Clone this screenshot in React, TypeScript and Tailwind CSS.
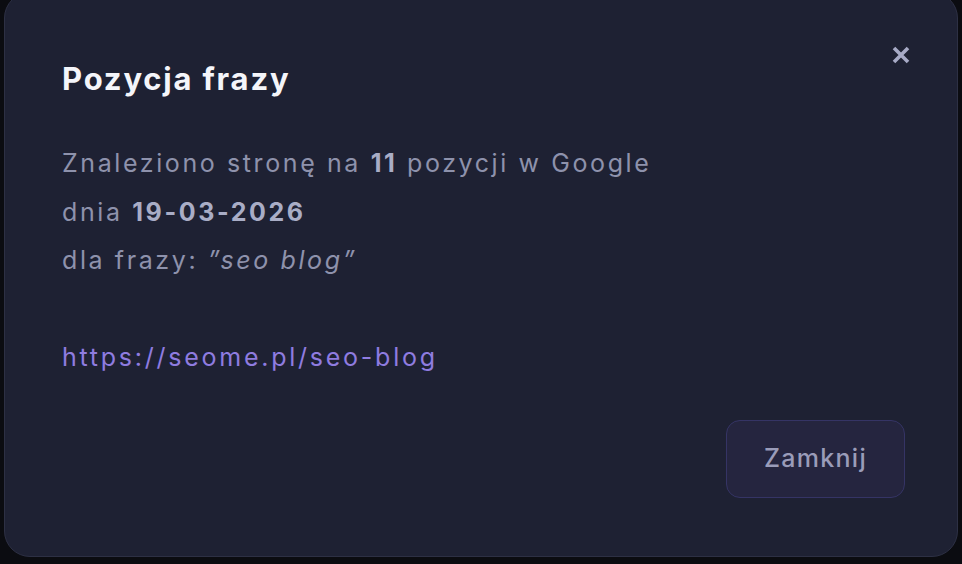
export default function App() {
  return (
    <div className="h-[564px] w-full overflow-hidden bg-[#0b0c11] px-[4px] pb-[7px]">
      <div
        className="relative -mt-[8px] flex h-[565px] flex-col rounded-[26px] border border-[#2d3044] bg-[#1e2133] pl-[57px] pr-[52px] pt-[66px] pb-[58px]"
        style={{ fontFamily: "Inter, 'Noto Sans', sans-serif" }}
      >
        <button
          type="button"
          className="absolute right-[46px] top-[52px] text-[#a7aac6]"
          aria-label="Zamknij"
        >
          <svg width="20" height="20" viewBox="0 0 20 20" fill="none">
            <path d="M3 3L17 17M17 3L3 17" stroke="currentColor" strokeWidth="3.6" strokeLinecap="butt" />
          </svg>
        </button>

        <h2 className="text-[31px] font-bold leading-[40px] tracking-[1.8px] text-[#f4f5fa]">
          Pozycja frazy
        </h2>

        <div className="mt-[40px] text-[25px] leading-[48.5px] tracking-[2.6px] text-[#8e92ac]">
          <p>
            Znaleziono stronę na <span className="font-bold text-[#a9adc6]">11</span> pozycji w Google
          </p>
          <p>
            dnia <span className="font-bold text-[#a9adc6]">19-03-2026</span>
          </p>
          <p>
            dla frazy: <span className="italic">”seo blog”</span>
          </p>
          <p className="mt-[48px]">
            <a href="#" className="tracking-[2.75px] text-[#8f7ce0]">
              https://seome.pl/seo-blog
            </a>
          </p>
        </div>

        <div className="mt-auto flex justify-end">
          <button
            type="button"
            className="h-[78px] w-[179px] rounded-[14px] border border-[#353465] bg-[#25253f] text-[25px] font-medium tracking-[1.3px] text-[#9a9cb9]"
          >
            Zamknij
          </button>
        </div>
      </div>
    </div>
  );
}
